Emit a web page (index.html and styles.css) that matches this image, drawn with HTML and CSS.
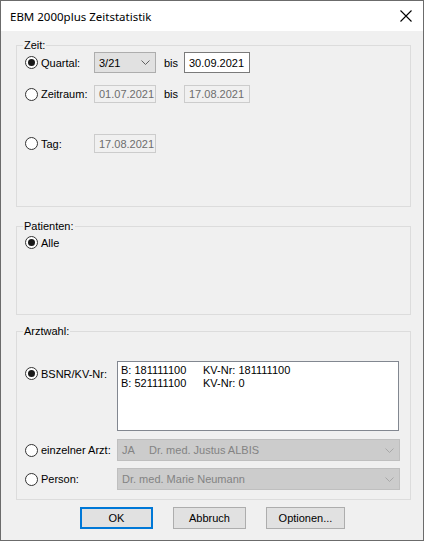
FILE: index.html
```html
<!DOCTYPE html>
<html lang="de">
<head>
  <meta charset="UTF-8" />
  <title>EBM 2000plus Zeitstatistik</title>
  <link rel="stylesheet" href="styles.css">
</head>
<body>
<div class="window">
  <header class="titlebar">
    <span class="title">EBM 2000plus Zeitstatistik</span>
    <svg class="close" width="12" height="12" viewBox="0 0 12 12"><path d="M0.5 0.5 L11.5 11.5 M11.5 0.5 L0.5 11.5" stroke="#000" stroke-width="1.1" fill="none"/></svg>
  </header>

  <div class="content">
    <!-- Zeitraum der Auswertung -->
    <fieldset class="group group-zeit">
      <legend>Zeit:</legend>
      <div class="row row-quartal">
        <label class="opt w-zeit"><span class="radio checked"></span>Quartal:</label>
        <div class="combo w-short"><span>3/21</span>
          <svg class="chev" width="9" height="5" viewBox="0 0 9 5"><path d="M0.5 0.5 L4.5 4.5 L8.5 0.5" stroke="#606060" fill="none"/></svg>
        </div>
        <span class="bis">bis</span>
        <div class="edit w-date">30.09.2021</div>
      </div>
      <div class="row row-zeitraum">
        <label class="opt w-zeit"><span class="radio"></span>Zeitraum:</label>
        <div class="edit disabled w-short">01.07.2021</div>
        <span class="bis">bis</span>
        <div class="edit disabled w-date">17.08.2021</div>
      </div>
      <div class="row row-tag">
        <label class="opt w-zeit"><span class="radio"></span>Tag:</label>
        <div class="edit disabled w-short">17.08.2021</div>
      </div>
    </fieldset>

    <fieldset class="group group-patienten">
      <legend>Patienten:</legend>
      <div class="row row-alle">
        <label class="opt"><span class="radio checked"></span>Alle</label>
      </div>
    </fieldset>

    <!-- Auswahl der Ärzte -->
    <fieldset class="group group-arzt">
      <legend>Arztwahl:</legend>
      <div class="row row-bsnr">
        <label class="opt w-arzt"><span class="radio checked"></span>BSNR/KV-Nr:</label>
        <div class="listbox">
          <div class="item"><span class="bsnr">B: 181111100</span><span>KV-Nr: 181111100</span></div>
          <div class="item"><span class="bsnr">B: 521111100</span><span>KV-Nr: 0</span></div>
        </div>
      </div>
      <div class="row row-einzel">
        <label class="opt w-arzt"><span class="radio"></span>einzelner Arzt:</label>
        <div class="combo disabled w-wide"><span><span class="kuerzel">JA</span>Dr. med. Justus ALBIS</span>
          <svg class="chev" width="9" height="5" viewBox="0 0 9 5"><path d="M0.5 0.5 L4.5 4.5 L8.5 0.5" stroke="#a8a8a8" fill="none"/></svg>
        </div>
      </div>
      <div class="row row-person">
        <label class="opt w-arzt"><span class="radio"></span>Person:</label>
        <div class="combo disabled w-wide"><span>Dr. med. Marie Neumann</span>
          <svg class="chev" width="9" height="5" viewBox="0 0 9 5"><path d="M0.5 0.5 L4.5 4.5 L8.5 0.5" stroke="#a8a8a8" fill="none"/></svg>
        </div>
      </div>
    </fieldset>

    <div class="buttons">
      <button class="btn default">OK</button>
      <button class="btn">Abbruch</button>
      <button class="btn btn-wide">Optionen...</button>
    </div>
  </div>
</div>
</body>
</html>
```

FILE: styles.css
```css
/* Base */
* { box-sizing: border-box; }
html, body { margin: 0; padding: 0; background: #f0f0f0; }
body { font-family: "Liberation Sans", Arial, sans-serif; font-size: 11px; color: #000; }

/* Window frame */
.window {
  width: 424px; height: 541px;
  border: 1px solid #6b6b6b;
  background: #f0f0f0;
  display: flex; flex-direction: column;
}
.titlebar {
  height: 30px; background: #fff;
  display: flex; align-items: center; justify-content: space-between;
  padding: 0 11px 0 9px;
}
.title { font-family: "Noto Sans", sans-serif; font-size: 11.5px; color: #000; }
.close { display: block; }

/* Dialog body */
.content { padding: 8px 12px 0 15px; display: flex; flex-direction: column; }

/* Group boxes */
.group {
  margin: 0; padding: 0 0 0 8px;
  border: 1px solid #dcdcdc;
  min-width: 0;
}
.group legend { padding: 0 1px; margin-left: -2px; line-height: 13px; height: 13px; }
.group-zeit { height: 168px; }
.group-patienten { height: 95px; margin-top: 13px; }
.group-arzt { height: 175px; margin-top: 10px; }

.row { display: flex; align-items: center; }
.row-quartal { height: 21px; }
.row-zeitraum { height: 18px; margin-top: 12px; }
.row-tag { height: 19px; margin-top: 31px; }
.row-alle { height: 13px; margin-top: 3px; }
.row-bsnr { align-items: flex-start; margin-top: 23px; }
.row-bsnr .opt { margin-top: 6px; }
.row-einzel { height: 22px; margin-top: 8px; }
.row-person { height: 22px; margin-top: 7px; }

/* Radio buttons */
.opt { display: flex; align-items: center; white-space: nowrap; }
.w-zeit { width: 69px; }
.w-arzt { width: 92px; }
.radio {
  width: 13px; height: 13px; border-radius: 50%;
  border: 1px solid #333; background: #fff;
  margin-right: 3px; flex: none;
  display: flex; align-items: center; justify-content: center;
}
.radio.checked::after {
  content: ""; width: 7px; height: 7px; border-radius: 50%; background: #1a1a1a;
}

/* Edit fields and combos */
.edit, .combo {
  height: 100%; display: flex; align-items: center;
  padding: 0 4px; white-space: nowrap;
}
.edit { background: #fff; border: 1px solid #7a7a7a; }
.edit.disabled { background: #f0f0f0; border-color: #cccccc; color: #6d6d6d; }
.combo {
  background: #e1e1e1; border: 1px solid #adadad;
  justify-content: space-between; padding-right: 5px;
}
.combo.disabled { background: #cccccc; border-color: #bfbfbf; color: #838383; }
.w-short { width: 62px; }
.w-date { width: 66px; }
.w-wide { width: 283px; }
.bis { margin: 0 7px 0 8px; width: 13px; }
.kuerzel { display: inline-block; width: 27px; }

/* Listbox */
.listbox {
  width: 282px; height: 70px;
  background: #fff; border: 1px solid #828790;
  padding: 2px 3px;
}
.item { line-height: 13px; white-space: nowrap; }
.bsnr { display: inline-block; width: 82px; }

/* Buttons */
.buttons { display: flex; gap: 20px; margin-top: 7px; padding-left: 64px; }
.btn {
  font: inherit; color: #000;
  width: 73px; height: 22px;
  background: #e1e1e1; border: 1px solid #adadad; padding: 0;
}
.btn.default { border: 2px solid #0078d7; }
.btn-wide { width: 79px; }
```
